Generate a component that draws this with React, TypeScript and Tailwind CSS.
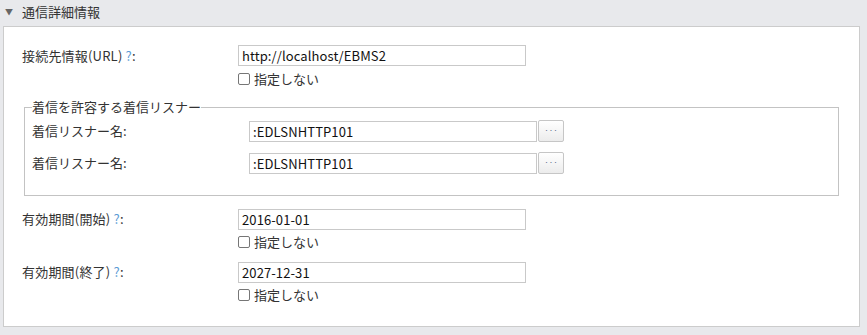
import React from "react";

const font = { fontFamily: '"Noto Sans CJK JP", "Noto Sans", sans-serif' };

function Q() {
  return <span className="text-[#5b9bd5]"> ?</span>;
}

function Check() {
  return (
    <label className="flex items-center h-[18px] text-[13px] text-[#333]">
      <span className="w-[12px] h-[12px] border border-[#767676] rounded-[2px] bg-white mr-[4px] box-border" />
      <span>指定しない</span>
    </label>
  );
}

function Input({ value, w }: { value: string; w: string }) {
  return (
    <div
      className={`${w} h-[21px] border border-[#c9c9c9] bg-white text-[13px] text-[#111] pl-[3px] flex items-center leading-none box-border tracking-[0.1px]`}
    >
      {value}
    </div>
  );
}

function DotsButton() {
  return (
    <div className="ml-[1px] w-[26px] h-[22px] border border-[#c6c6c6] rounded-[2px] bg-gradient-to-b from-[#ffffff] to-[#ececec] flex items-center justify-center box-border">
      <span className="text-[8px] text-[#5a6b88] leading-none -mt-[2px]">···</span>
    </div>
  );
}

export default function App() {
  return (
    <div className="w-[867px] h-[335px] bg-[#e8e9ec] overflow-hidden" style={font}>
      <div className="h-[26px] flex items-start pt-[2px] pl-[5px] text-[13px] text-[#333]">
        <span className="text-[8px] text-[#666] mt-[4px] w-[17px]">▼</span>
        <span>通信詳細情報</span>
      </div>
      <div className="ml-[3px] w-[857px] h-[301px] bg-white border border-[#cccccc] box-border pl-[18px] pt-[18px]">
        {/* URL row */}
        <div className="flex">
          <div className="w-[216px] text-[13px] text-[#333] pt-[1px] tracking-[0.2px]">
            接続先情報(URL)
            <Q />:
          </div>
          <div className="flex flex-col">
            <Input value="http://localhost/EBMS2" w="w-[288px]" />
            <div className="mt-[4px]">
              <Check />
            </div>
          </div>
        </div>
        {/* fieldset */}
        <fieldset className="mt-[11px] ml-[2px] w-[815px] h-[97px] border border-[#c3c3c3] pl-[7px] pr-0 pb-0 pt-0 box-border">
          <legend className="text-[13px] text-[#333] px-0 leading-[16px]">着信を許容する着信リスナー</legend>
          <div className="flex items-center mt-[5px]">
            <div className="w-[217px] text-[13px] text-[#333]">着信リスナー名:</div>
            <Input value=":EDLSNHTTP101" w="w-[288px]" />
            <DotsButton />
          </div>
          <div className="flex items-center mt-[10px]">
            <div className="w-[217px] text-[13px] text-[#333]">着信リスナー名:</div>
            <Input value=":EDLSNHTTP101" w="w-[288px]" />
            <DotsButton />
          </div>
        </fieldset>
        {/* start */}
        <div className="flex mt-[13px]">
          <div className="w-[216px] text-[13px] text-[#333] tracking-[0.2px]">
            有効期間(開始)
            <Q />:
          </div>
          <div className="flex flex-col">
            <Input value="2016-01-01" w="w-[288px]" />
            <div className="mt-[3px]">
              <Check />
            </div>
          </div>
        </div>
        <div className="flex mt-[11px]">
          <div className="w-[216px] text-[13px] text-[#333] tracking-[0.2px]">
            有効期間(終了)
            <Q />:
          </div>
          <div className="flex flex-col">
            <Input value="2027-12-31" w="w-[288px]" />
            <div className="mt-[3px]">
              <Check />
            </div>
          </div>
        </div>
      </div>
    </div>
  );
}
